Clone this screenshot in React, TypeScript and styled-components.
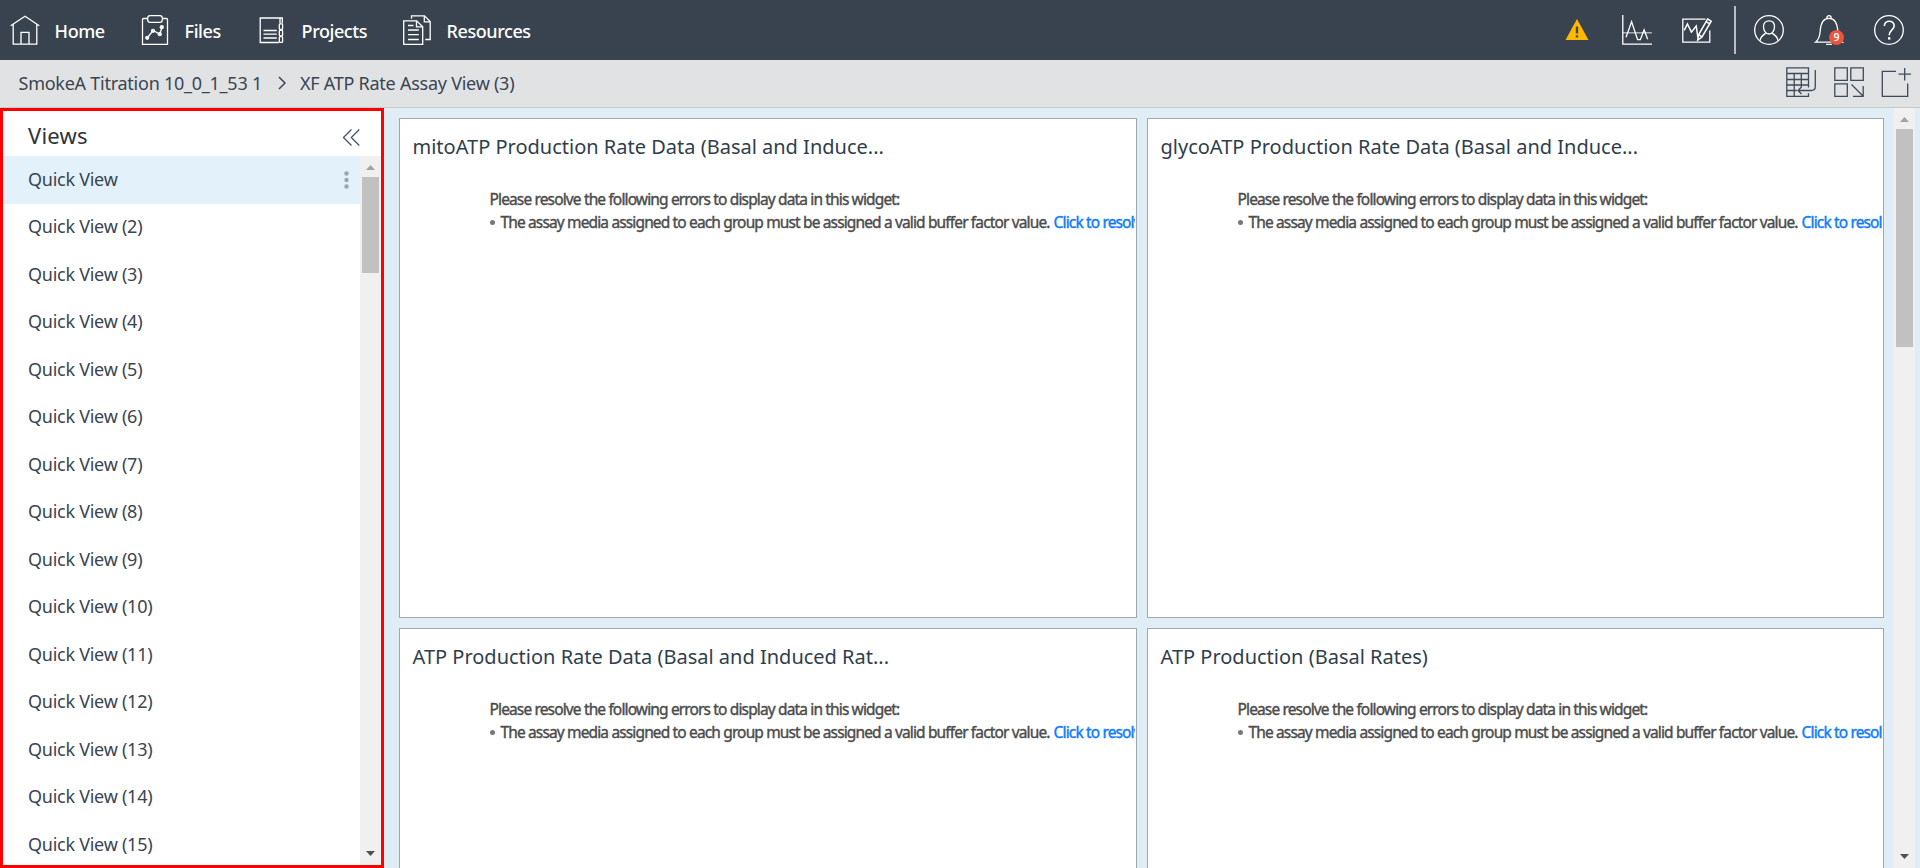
import React from "react";
import styled, { createGlobalStyle } from "styled-components";

const GlobalStyle = createGlobalStyle`
  * { box-sizing: border-box; }
  html, body { margin: 0; padding: 0; height: 100%; overflow: hidden; }
  body { font-family: "Noto Sans", "Open Sans", sans-serif; color: #3a4551; }
`;

const Page = styled.div`
  display: flex;
  flex-direction: column;
  width: 100vw;
  height: 868px;
  background: #e0edf5;
`;

const TopBar = styled.header`
  display: flex;
  justify-content: space-between;
  align-items: center;
  flex: none;
  height: 60px;
  padding: 0 16px 0 10px;
  background: #39434f;
  color: #fff;
`;

const Nav = styled.nav`
  display: flex;
`;

const NavItem = styled.a<{ $width: number }>`
  display: flex;
  align-items: center;
  gap: 14.6px;
  width: ${(p) => p.$width}px;
  font-size: 18px;
  font-weight: 500;
  letter-spacing: -0.43px;
  line-height: 30px;
  white-space: nowrap;
`;

const NavLabel = styled.span`
  padding-top: 2px;
`;

const Actions = styled.div`
  display: flex;
  align-items: center;
  gap: 30px;
`;

const Divider = styled.div`
  width: 2px;
  height: 48px;
  margin: 0 -12px 0 -8px;
  background: #b9bec3;
`;

const Icon = styled.svg`
  display: block;
  flex: none;
  width: 30px;
  height: 30px;
  fill: none;
  stroke: currentColor;
  stroke-width: 1.3;
  overflow: visible;
`;

const BellBox = styled.div`
  position: relative;
`;

const Badge = styled.span`
  position: absolute;
  left: 15px;
  top: 15px;
  width: 15px;
  height: 15px;
  border-radius: 50%;
  background: #f0523a;
  color: #fff;
  font-size: 10.5px;
  font-weight: 600;
  line-height: 15px;
  text-align: center;
`;

const SubBar = styled.div`
  display: flex;
  justify-content: space-between;
  align-items: center;
  flex: none;
  height: 48px;
  padding: 0 8px 0 18.5px;
  background: #e1e2e4;
  border-bottom: 1px solid #c5c9cc;
`;

const Crumbs = styled.div`
  display: flex;
  align-items: center;
  font-size: 18px;
  letter-spacing: -0.25px;
  line-height: 30px;
  padding-bottom: 1px;
`;

const CrumbArrow = styled.svg`
  width: 8px;
  height: 14px;
  margin: 0 14px 0 16px;
  fill: none;
  stroke: #3a4551;
  stroke-width: 1.5;
`;

const Tools = styled.div`
  display: flex;
  gap: 18px;
  padding-bottom: 3px;
  color: #3f4a5a;
`;

const Body = styled.div`
  display: flex;
  flex: 1;
  min-height: 0;
`;

const Sidebar = styled.aside`
  display: flex;
  flex-direction: column;
  flex: none;
  width: 384px;
  border: 3px solid #ff0000;
  background: #fff;
`;

const SidebarHead = styled.div`
  display: flex;
  justify-content: space-between;
  align-items: center;
  flex: none;
  height: 45px;
  padding: 3px 21px 0 25px;
`;

const SidebarTitle = styled.h2`
  margin: 0;
  font-size: 22px;
  font-weight: 400;
  letter-spacing: 0.2px;
  line-height: 30px;
  color: #2e3338;
`;

const Collapse = styled.svg`
  width: 17px;
  height: 17px;
  margin-top: 4px;
  fill: none;
  stroke: #4a5563;
  stroke-width: 1.3;
`;

const SidebarBody = styled.div`
  display: flex;
  flex: 1;
  min-height: 0;
`;

const ViewList = styled.ul`
  flex: 1;
  margin: 0;
  padding: 0;
  list-style: none;
  overflow: hidden;
`;

const ViewRow = styled.li<{ $active?: boolean }>`
  display: flex;
  justify-content: space-between;
  align-items: center;
  height: 47.5px;
  padding: 0 11px 2px 25px;
  font-size: 18px;
  letter-spacing: -0.26px;
  background: ${(p) => (p.$active ? "#e3f2fa" : "#fff")};
`;

const Dots = styled.svg`
  width: 5px;
  height: 18px;
  margin-top: 3px;
  fill: #9da5ad;
`;

const Track = styled.div<{ $bottom: number }>`
  display: flex;
  flex-direction: column;
  align-items: center;
  flex: none;
  width: 21px;
  padding: 9px 0 ${(p) => p.$bottom}px;
  background: #f0f0f0;
`;

const Thumb = styled.div<{ $height: number }>`
  width: 17px;
  height: ${(p) => p.$height}px;
  margin: 7px 0 auto;
  background: #c1c1c1;
`;

const Arrow = styled.svg<{ $tone: string }>`
  display: block;
  width: 9px;
  height: 5px;
  fill: ${(p) => p.$tone};
`;

const Main = styled.main`
  display: flex;
  justify-content: space-between;
  flex: 1;
  min-width: 0;
  padding: 0 5px 0 15px;
`;

const Grid = styled.div`
  display: grid;
  grid-template-columns: 738px 737px;
  grid-auto-rows: 500px;
  gap: 10px;
  padding-top: 10px;
  overflow: hidden;
`;

const Card = styled.section`
  padding: 12px 1px 0 12.5px;
  border: 1px solid #9ea9b2;
  background: #fff;
  overflow: hidden;
`;

const CardTitle = styled.h3`
  margin: 0;
  font-size: 20px;
  font-weight: 400;
  line-height: 32px;
  color: #2f3e4c;
  white-space: nowrap;
`;

const Errors = styled.div`
  margin: 25px 0 0 77px;
  overflow: hidden;
  font-size: 15.5px;
  font-weight: 400;
  line-height: 23px;
  letter-spacing: -0.86px;
  -webkit-text-stroke: 0.4px currentColor;
  color: #4c4c4c;
  white-space: nowrap;
`;

const ErrorLine = styled.div`
  display: flex;
  align-items: center;
`;

const Bullet = styled.span`
  flex: none;
  width: 5px;
  height: 5px;
  margin-right: 6px;
  border-radius: 50%;
  background: #777;
`;

const ResolveLink = styled.a`
  margin-left: 4px;
  color: #0a7cff;
`;

const HomeIcon = () => (
  <Icon viewBox="0 0 30 30">
    <path d="M.7 10.7 15 1.2l14.3 9.5M3.2 9.2v20h23.6v-20M11 29V17.4h8V29" />
  </Icon>
);

const FilesIcon = () => (
  <Icon viewBox="0 0 30 30">
    <path d="M7 3.5H3.5q-1 0-1 1v24.8h25V4.5q0-1-1-1H23" />
    <rect x="7.7" y=".7" width="14.6" height="6.6" rx="2.4" />
    <path d="m7.2 23 5.8-7.5 6.8 3.5L22 12.3" />
    <g fill="currentColor" stroke="none">
      <circle cx="7.2" cy="22.8" r="2.1" />
      <circle cx="13" cy="15.8" r="2.1" />
      <circle cx="19.8" cy="19.2" r="2.1" />
      <circle cx="21.8" cy="12.2" r="2.1" />
    </g>
  </Icon>
);

const ProjectsIcon = () => (
  <Icon viewBox="0 0 30 30">
    <path d="M25.3 8.5V3H3.2v24.5h18.6M23 3v5.5" />
    <path d="M6.5 15.5h13.3M6.5 19.2h13.3M6.5 23h13.3" />
    <rect x="22.3" y="8.8" width="3.3" height="5.7" rx="1" />
    <rect x="22.3" y="15.2" width="3.3" height="5.7" rx="1" />
    <rect x="22.3" y="21.6" width="3.3" height="5.8" rx="1" />
  </Icon>
);

const ResourcesIcon = () => (
  <Icon viewBox="0 0 30 30">
    <path d="M1.7 5.8h13l6 6v17.5h-19z" />
    <path d="M14.5 5.8v6h6M9.5 3.8V.8h13l5.7 5.7v18h-5M22.3.8v6h6" />
    <path d="M6 10.5h5.5M6 15h10.8M6 19.7h10.8M6 24.5h10.8" />
  </Icon>
);

const WarningIcon = () => (
  <Icon viewBox="0 0 30 30">
    <path d="M15 4 26.5 25h-23z" fill="#ffb800" stroke="none" />
    <path d="M15 11.5v7M15 20.2v2.4" stroke="#4a4a3c" strokeWidth="2.4" />
  </Icon>
);

const ChartIcon = () => (
  <Icon viewBox="0 0 30 30">
    <path d="M.8 0v29.2H30" />
    <path d="M1 17.8h29" opacity=".65" />
    <path d="M4 22.3 9.6 6.7l6 18h2.7l3.8-9.8 3.6 9.3" />
  </Icon>
);

const EditChartIcon = () => (
  <Icon viewBox="0 0 30 30">
    <path d="M23.5 4.2H.8v23h27V15.5" />
    <path d="m2.2 15.3 3.2-6.3 4 8.2 4.8-6.2 1.7 11.500" strokeWidth="1.500" />
    <path d="m25.600 4 3.600 2.200L20 22l-4.300 3 .9-5.200zM24.200 6.600l3.500 2.200M16.900 19.800l3 2" strokeWidth="1.500" />
  </Icon>
);

const UserIcon = () => (
  <Icon viewBox="0 0 30 30">
    <circle cx="15" cy="15" r="14.3" />
    <path d="M15 5.8c3.5 0 5.5 2.4 5.5 5.8 0 4-2.4 7.4-5.5 7.4s-5.5-3.4-5.5-7.4c0-3.4 2-5.8 5.5-5.8zM6 25.7c.3-3.8 2.5-5.5 6-7.6M24 25.7c-.3-3.8-2.5-5.5-6-7.6" />
  </Icon>
);

const BellIcon = () => (
  <Icon viewBox="0 0 30 30">
    <path d="M12.8 3.2C12.8-.2 17.2-.2 17.2 3.2M1.5 27.2c3.5-2.7 4.3-5.7 4.7-11.2C6.7 8 9 3.3 15 3.3S23.3 8 23.8 16c.4 5.5 1.2 8.5 4.7 11.2zM12 29.3h6" />
  </Icon>
);

const HelpIcon = () => (
  <Icon viewBox="0 0 30 30">
    <circle cx="15" cy="15" r="14.3" />
    <path d="M10.4 11c0-6.3 9.8-6.3 9.8-.2 0 4.2-5 4.2-5 9.5" strokeWidth="1.6" />
    <path d="M15.2 22.2v2.4" strokeWidth="2.4" />
  </Icon>
);

const TableIcon = () => (
  <Icon viewBox="0 0 30 30">
    <path d="M22.5 20.5V.8H.8v28.5h21.7v-3M.8 6.5h21.7M.8 12.5h21.7M.8 18h21.7M.8 23.5h10M8.2 6.5v22.8M15.3 6.5v13.5" />
    <path d="M29.3 3v16.5q0 4-4 4H12M15.5 20 12 23.5l3.5 3.5" />
  </Icon>
);

const LayoutIcon = () => (
  <Icon viewBox="0 0 30 30">
    <path d="M.8.8h12.500v12.500H.8zM16.800.8h12.500v12.500H16.800zM.8 16.800h12.500v12.500H.8zM17.500 17.500l11.500 11.500M29.200 19v10.300H19" />
  </Icon>
);

const AddIcon = () => (
  <Icon viewBox="0 0 30 30">
    <path d="M14 4.3H.3v25h25.4V16.5M22.7 1v12.5M16.5 7.2H29" />
  </Icon>
);

const ScrollBar = ({ thumb, bottom }: { thumb: number; bottom: number }) => (
  <Track $bottom={bottom}>
    <Arrow $tone="#a3a3a3" viewBox="0 0 9 5">
      <path d="M0 5 4.5 0 9 5z" />
    </Arrow>
    <Thumb $height={thumb} />
    <Arrow $tone="#505050" viewBox="0 0 9 5">
      <path d="M0 0h9L4.5 5z" />
    </Arrow>
  </Track>
);

const views = Array.from({ length: 15 }, (_, i) => (i === 0 ? "Quick View" : `Quick View (${i + 1})`));

const widgets = [
  "mitoATP Production Rate Data (Basal and Induce...",
  "glycoATP Production Rate Data (Basal and Induce...",
  "ATP Production Rate Data (Basal and Induced Rat...",
  "ATP Production (Basal Rates)",
];

const Widget = ({ title }: { title: string }) => (
  <Card>
    <CardTitle>{title}</CardTitle>
    <Errors>
      <ErrorLine>Please resolve the following errors to display data in this widget:</ErrorLine>
      <ErrorLine>
        <Bullet />
        The assay media assigned to each group must be assigned a valid buffer factor value.
        <ResolveLink>Click to resolve</ResolveLink>
      </ErrorLine>
    </Errors>
  </Card>
);

export default function App() {
  return (
    <Page>
      <GlobalStyle />
      <TopBar>
        <Nav>
          <NavItem $width={130}><HomeIcon /><NavLabel>Home</NavLabel></NavItem>
          <NavItem $width={117}><FilesIcon /><NavLabel>Files</NavLabel></NavItem>
          <NavItem $width={145}><ProjectsIcon /><NavLabel>Projects</NavLabel></NavItem>
          <NavItem $width={140}><ResourcesIcon /><NavLabel>Resources</NavLabel></NavItem>
        </Nav>
        <Actions>
          <WarningIcon />
          <ChartIcon />
          <EditChartIcon />
          <Divider />
          <UserIcon />
          <BellBox>
            <BellIcon />
            <Badge>9</Badge>
          </BellBox>
          <HelpIcon />
        </Actions>
      </TopBar>
      <SubBar>
        <Crumbs>
          <span>SmokeA Titration 10_0_1_53 1</span>
          <CrumbArrow viewBox="0 0 8 14"><path d="m1 1 6 6-6 6" /></CrumbArrow>
          <span>XF ATP Rate Assay View (3)</span>
        </Crumbs>
        <Tools>
          <TableIcon />
          <LayoutIcon />
          <AddIcon />
        </Tools>
      </SubBar>
      <Body>
        <Sidebar>
          <SidebarHead>
            <SidebarTitle>Views</SidebarTitle>
            <Collapse viewBox="0 0 17 17"><path d="M8.5.5l-8 8 8 8M16.3.5l-8 8 8 8" /></Collapse>
          </SidebarHead>
          <SidebarBody>
            <ViewList>
              {views.map((v, i) => (
                <ViewRow key={v} $active={i === 0}>
                  {v}
                  {i === 0 && (
                    <Dots viewBox="0 0 5 18">
                      <circle cx="2.5" cy="2.5" r="2.2" />
                      <circle cx="2.5" cy="9" r="2.2" />
                      <circle cx="2.5" cy="15.5" r="2.2" />
                    </Dots>
                  )}
                </ViewRow>
              ))}
            </ViewList>
            <ScrollBar thumb={96} bottom={9} />
          </SidebarBody>
        </Sidebar>
        <Main>
          <Grid>
            {widgets.map((t) => <Widget key={t} title={t} />)}
          </Grid>
          <ScrollBar thumb={218} bottom={9} />
        </Main>
      </Body>
    </Page>
  );
}
